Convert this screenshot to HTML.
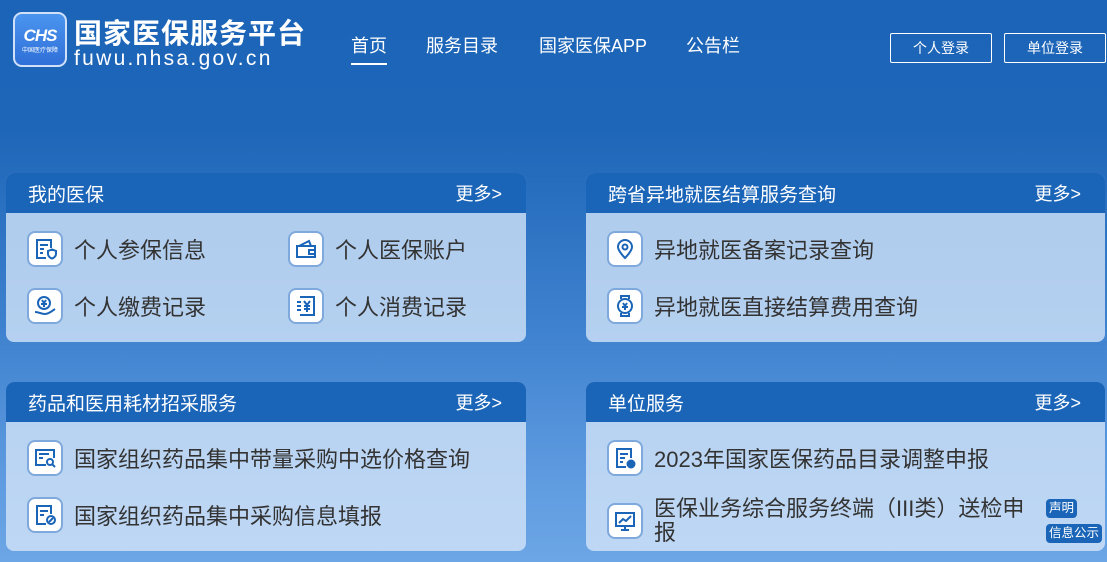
<!DOCTYPE html>
<html><head><meta charset="utf-8"><style>
*{margin:0;padding:0;box-sizing:border-box}
body{width:1107px;height:562px;overflow:hidden;font-family:"Liberation Sans","Noto Sans CJK SC",sans-serif;background:linear-gradient(180deg,#1b64b7 0px,#1e66b8 130px,#3f82cf 330px,#5f9be0 480px,#6ca6e6 562px);position:relative}
.logo{position:absolute;left:13px;top:12px;width:54px;height:55px;border-radius:9px;background:linear-gradient(180deg,#4b95ef,#2f6fd8);border:2px solid #cfe0f8;color:#fff;text-align:center}
.logo b{display:block;font-style:italic;font-size:17px;margin-top:12px;letter-spacing:-1px}
.logo i{display:block;font-style:normal;font-size:6px;margin-top:-1px}
.t1{position:absolute;left:74px;top:12px;color:#fff;font-size:28px;font-weight:bold;letter-spacing:1px}
.t2{position:absolute;left:74px;top:47px;color:#fff;font-size:21px;letter-spacing:2.3px}
.nav{position:absolute;top:32px;color:#fff;font-size:18px}
.ul{position:absolute;left:351px;top:63px;width:36px;height:2px;background:#fff}
.btn{position:absolute;top:33px;width:102px;height:30px;border:1px solid #fff;border-radius:2px;color:#fff;font-size:14px;text-align:center;line-height:28px}
.card{position:absolute;width:520px;height:169px;border-radius:8px;overflow:hidden;background:rgba(210,228,248,.8)}
.hd{height:40px;background:#1b65b8;color:#fff;font-size:19px;line-height:40px;padding-top:3px;padding-left:22px;position:relative}
.hd span{position:absolute;right:24px;top:1px;font-size:18px}
.it{position:absolute;font-size:22px;color:#333;display:flex;align-items:center}
.ic{width:36px;height:36px;border-radius:8px;background:#fff;border:2px solid #7fa9dc;margin-right:11px;display:flex;align-items:center;justify-content:center;flex-shrink:0}
.tag{position:absolute;background:#1b65b8;color:#fff;font-size:12.5px;border-radius:4px;padding:0 3px;line-height:19px;white-space:nowrap}
</style></head><body>
<div class="logo"><b>CHS</b><i>中国医疗保障</i></div>
<div class="t1">国家医保服务平台</div>
<div class="t2">fuwu.nhsa.gov.cn</div>
<div class="nav" style="left:351px">首页</div>
<div class="nav" style="left:426px">服务目录</div>
<div class="nav" style="left:539px">国家医保APP</div>
<div class="nav" style="left:686px">公告栏</div>
<div class="ul"></div>
<div class="btn" style="left:890px">个人登录</div>
<div class="btn" style="left:1004px">单位登录</div>

<div class="card" style="left:6px;top:173px">
<div class="hd">我的医保<span>更多&gt;</span></div>
<div class="it" style="left:21px;top:58px"><div class="ic"><svg width="24" height="24" viewBox="0 0 24 24" fill="none" stroke="#1b65b8" stroke-width="2"><path d="M13 21H4V3h14v8M7 8h8M7 12h4M7 16h3"/><path d="M15 14l4-1.5 4 1.5v3c0 2-2 4-4 4.5-2-.5-4-2.5-4-4.5z"/></svg></div>个人参保信息</div>
<div class="it" style="left:282px;top:58px"><div class="ic"><svg width="24" height="24" viewBox="0 0 24 24" fill="none" stroke="#1b65b8" stroke-width="2"><path d="M3 9h18v11H3zM5 9l10-5 2 5M15 13h6v4h-6z"/></svg></div>个人医保账户</div>
<div class="it" style="left:21px;top:115px"><div class="ic"><svg width="24" height="24" viewBox="0 0 24 24" fill="none" stroke="#1b65b8" stroke-width="2"><circle cx="11" cy="9" r="6"/><path d="M9 6l2 3 2-3M8 10h6M11 9v4M2 18c4 0 6 2 10 2s7-3 10-5"/></svg></div>个人缴费记录</div>
<div class="it" style="left:282px;top:115px"><div class="ic"><svg width="24" height="24" viewBox="0 0 24 24" fill="none" stroke="#1b65b8" stroke-width="2"><path d="M6 3h14v18H6M3 8h4M3 12h4M3 16h4M10 7l3 4 3-4M10 12h6M10 15h6M13 11v7"/></svg></div>个人消费记录</div>
</div>

<div class="card" style="left:586px;top:173px;width:519px">
<div class="hd">跨省异地就医结算服务查询<span>更多&gt;</span></div>
<div class="it" style="left:21px;top:58px"><div class="ic"><svg width="24" height="24" viewBox="0 0 24 24" fill="none" stroke="#1b65b8" stroke-width="2"><path d="M12 21s-7-7-7-11a7 7 0 0114 0c0 4-7 11-7 11z"/><circle cx="12" cy="10" r="2.5"/></svg></div>异地就医备案记录查询</div>
<div class="it" style="left:21px;top:115px"><div class="ic"><svg width="24" height="24" viewBox="0 0 24 24" fill="none" stroke="#1b65b8" stroke-width="2"><circle cx="12" cy="12" r="7"/><path d="M8 5V2h8v3M8 19v3h8v-3M10 9l2 3 2-3M9 13h6M12 12v4"/></svg></div>异地就医直接结算费用查询</div>
</div>

<div class="card" style="left:6px;top:382px">
<div class="hd">药品和医用耗材招采服务<span>更多&gt;</span></div>
<div class="it" style="left:21px;top:58px"><div class="ic"><svg width="24" height="24" viewBox="0 0 24 24" fill="none" stroke="#1b65b8" stroke-width="2"><path d="M13 19H3V4h18v8M6 8h10M6 12h4"/><circle cx="17" cy="16" r="3"/><path d="M19 18l3 3"/></svg></div>国家组织药品集中带量采购中选价格查询</div>
<div class="it" style="left:21px;top:115px"><div class="ic"><svg width="24" height="24" viewBox="0 0 24 24" fill="none" stroke="#1b65b8" stroke-width="2"><path d="M13 21H4V3h14v8M7 8h8M7 12h4"/><circle cx="18" cy="17" r="4"/><path d="M16 19l4-4"/></svg></div>国家组织药品集中采购信息填报</div>
</div>

<div class="card" style="left:586px;top:382px;width:519px">
<div class="hd">单位服务<span>更多&gt;</span></div>
<div class="it" style="left:21px;top:58px"><div class="ic"><svg width="24" height="24" viewBox="0 0 24 24" fill="none" stroke="#1b65b8" stroke-width="2"><path d="M13 21H4V3h14v9M7 8h8M7 12h5M7 16h3"/><circle cx="18" cy="18" r="3.5" fill="#1b65b8"/></svg></div>2023年国家医保药品目录调整申报</div>
<div class="it" style="left:21px;top:115px;width:430px;line-height:24px"><div class="ic"><svg width="24" height="24" viewBox="0 0 24 24" fill="none" stroke="#1b65b8" stroke-width="2"><path d="M3 4h18v13H3zM8 21h8M12 17v4M6 14l4-4 3 2 5-5"/></svg></div>医保业务综合服务终端（III类）送检申报</div>
<div class="tag" style="left:460px;top:117px">声明</div>
<div class="tag" style="left:460px;top:142px">信息公示</div>
</div>
</body></html>
